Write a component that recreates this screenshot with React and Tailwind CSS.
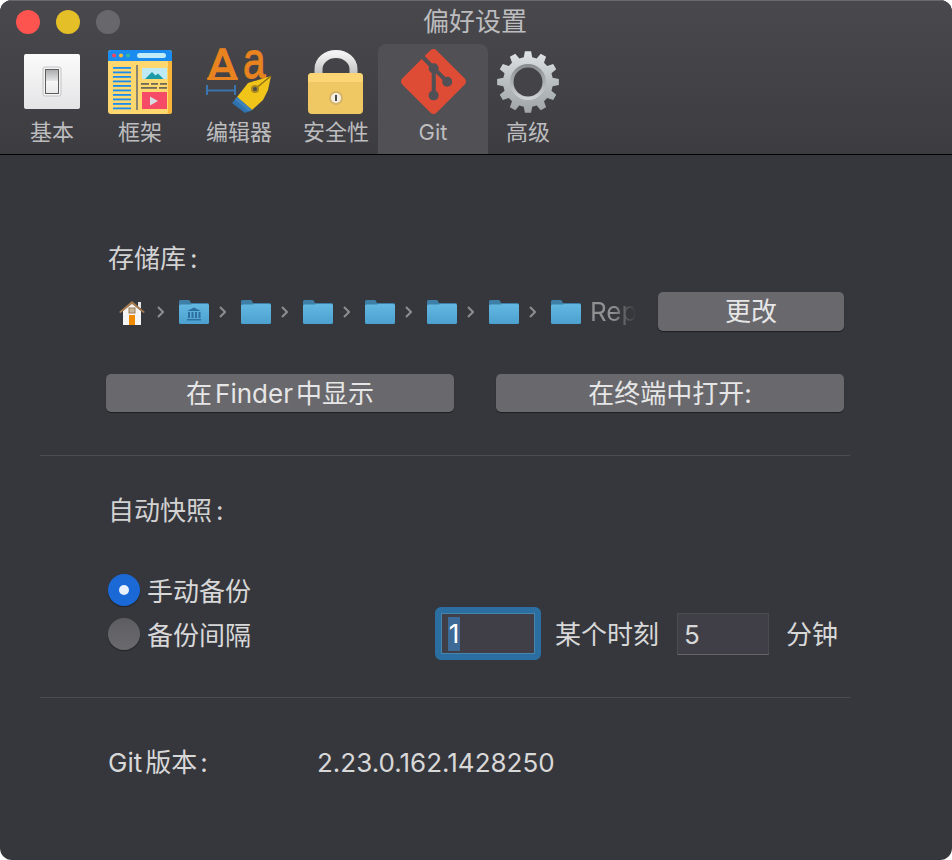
import React from "react";

const FONT = "font-['Inter','Noto_Sans_CJK_SC',sans-serif]";

const SwitchIcon = () => (
    <svg width="64" height="64" viewBox="0 0 64 64">
        <defs>
            <linearGradient id="plate" x1="0" y1="0" x2="0" y2="1">
                <stop offset="0" stopColor="#fbfbfb" />
                <stop offset="1" stopColor="#e4e4e6" />
            </linearGradient>
            <linearGradient id="rocker" x1="0" y1="0" x2="0" y2="1">
                <stop offset="0" stopColor="#a9aaac" />
                <stop offset="0.45" stopColor="#e2e2e3" />
                <stop offset="0.5" stopColor="#f7f7f7" />
                <stop offset="1" stopColor="#e8e8e8" />
            </linearGradient>
        </defs>
        <rect x="4" y="4" width="56" height="55" rx="2" fill="url(#plate)" />
        <rect x="23" y="17" width="18" height="29" rx="2" fill="#f3f3f3" stroke="#c4c4c6" />
        <rect x="25.5" y="19.5" width="13" height="24" fill="url(#rocker)" stroke="#5d5d60" strokeWidth="1" />
    </svg>
);

const FrameIcon = () => (
    <svg width="64" height="64" viewBox="0 0 64 64">
        <rect x="0" y="0" width="64" height="64" rx="3" fill="#ffd76f" />
        <path d="M60 11h4v50a3 3 0 0 1-3 3h-3c2 0 2-2 2-3z" fill="#f9b53a" />
        <path d="M3 0h58a3 3 0 0 1 3 3v8H0V3a3 3 0 0 1 3-3z" fill="#1a8cf0" />
        <circle cx="6" cy="5.5" r="2" fill="#f3475f" />
        <circle cx="13" cy="5.5" r="2" fill="#fdbb32" />
        <circle cx="20" cy="5.5" r="2" fill="#35b8a0" />
        <rect x="29" y="3" width="29" height="5" rx="2.5" fill="#bfeaf7" />
        <g fill="#1a8cf0">
            {[17, 21.5, 26, 30.5, 35, 39.5, 44, 48.5, 53, 57.5].map((y) => (
                <rect key={y} x="5" y={y} width="18" height="1.8" />
            ))}
        </g>
        <rect x="28" y="15" width="2" height="45" fill="#8a8470" />
        <rect x="34" y="18" width="25" height="11" fill="#bdeaf5" />
        <path d="M37 29l7-7 3.500 3.500 2.500-2 5.500 5.500z" fill="#1b9aa8" />
        <g fill="#6f6a58">
            <rect x="33" y="33" width="8" height="1.8" />
            <rect x="43" y="33" width="7" height="1.8" />
            <rect x="52" y="33" width="7" height="1.8" />
            <rect x="33" y="37" width="16" height="1.8" />
            <rect x="51" y="37" width="8" height="1.8" />
        </g>
        <rect x="34" y="42" width="25" height="17" fill="#f64b66" />
        <path d="M42 46.500l8 4.500-8 4.500z" fill="#d7dde0" />
    </svg>
);

const EditorIcon = () => (
    <svg width="68" height="66" viewBox="0 0 68 66">
        <text x="3" y="31" fontFamily="'DejaVu Sans', sans-serif" fontSize="41" textLength="29" lengthAdjust="spacingAndGlyphs" fill="#e9831f" stroke="#e9831f" strokeWidth="1.500">A</text>
        <rect x="2" y="29" width="31" height="3" rx="1.500" fill="#e9831f" />
        <text transform="translate(38 30) scale(0.78 1)" x="0" y="0" fontFamily="'Liberation Sans', sans-serif" fontSize="52" fill="#e9831f" stroke="#e9831f" strokeWidth="1">a</text>
        <path d="M2 37v10M30 37v10M3 42.500h26" stroke="#3c74ae" strokeWidth="2" fill="none" />
        <path d="M66 28L43 35l-7 9-4 5 15 13 11-10 5-10z" fill="#f0c418" />
        <path d="M66 28L50 41" stroke="#8a6b15" strokeWidth="1.200" />
        <circle cx="50" cy="41" r="4" fill="#a9871f" />
        <circle cx="50" cy="41" r="2" fill="#4b4b4b" />
        <path d="M32 49l-5 6 13 10 7-3z" fill="#2f73ae" />
        <path d="M32 49l15 13-3 1.500-14-12z" fill="#3e83bd" />
    </svg>
);

const LockIcon = () => (
    <svg width="62" height="66" viewBox="0 0 62 66">
        <defs>
            <linearGradient id="shackle" x1="0" y1="0" x2="0" y2="1">
                <stop offset="0" stopColor="#f2f2f2" />
                <stop offset="1" stopColor="#b8b8b8" />
            </linearGradient>
        </defs>
        <path d="M13.500 30V21a17.500 15 0 0 1 35 0v9" fill="none" stroke="url(#shackle)" strokeWidth="8" />
        <rect x="3" y="25" width="55" height="41" rx="4" fill="#efc864" />
        <path d="M3 34v-5a4 4 0 0 1 4-4h47a4 4 0 0 1 4 4v5z" fill="#fcd674" />
        <circle cx="31" cy="50" r="7" fill="#d5b466" />
        <circle cx="31" cy="50" r="5" fill="#f4f1e4" />
        <rect x="30" y="47" width="2" height="6" fill="#4a4a4a" />
    </svg>
);

const GitIcon = () => (
    <svg width="65" height="65" viewBox="0 0 24 24">
        <path
            fill="#de4c36"
            d="M23.546 10.93L13.067.452c-.604-.603-1.582-.603-2.188 0L8.708 2.627l2.76 2.76c.645-.215 1.379-.07 1.889.441.516.515.658 1.258.438 1.9l2.658 2.66c.645-.223 1.387-.078 1.9.435.721.72.721 1.884 0 2.604-.719.719-1.881.719-2.6 0-.539-.541-.674-1.337-.404-1.996L12.86 8.955v6.525c.176.086.342.203.488.348.713.721.713 1.883 0 2.6-.719.721-1.889.721-2.609 0-.719-.719-.719-1.879 0-2.598.182-.18.387-.316.605-.406V8.835c-.217-.091-.424-.222-.6-.401-.545-.545-.676-1.342-.396-2.009L7.636 3.7.45 10.881c-.6.605-.6 1.584 0 2.189l10.48 10.477c.604.604 1.582.604 2.186 0l10.43-10.43c.605-.603.605-1.582 0-2.187"
        />
    </svg>
);

const gearPath = () => {
    const teeth = 12;
    let d = "";
    for (let i = 0; i < teeth; i++) {
        const a = (i / teeth) * Math.PI * 2 - Math.PI / 2;
        const pts = [
            [25, -0.17],
            [31, -0.1],
            [31, 0.1],
            [25, 0.17],
        ];
        pts.forEach(([r, off], j) => {
            const x = 32 + r * Math.cos(a + off);
            const y = 32 + r * Math.sin(a + off);
            d += `${i === 0 && j === 0 ? "M" : "L"}${x.toFixed(2)} ${y.toFixed(2)}`;
        });
    }
    return d + "Z";
};

const GearIcon = () => (
    <svg width="64" height="64" viewBox="0 0 64 64">
        <defs>
            <linearGradient id="gear" x1="0" y1="0" x2="0" y2="1">
                <stop offset="0" stopColor="#e0e4e5" />
                <stop offset="0.5" stopColor="#b9bfc1" />
                <stop offset="1" stopColor="#a0a4a7" />
            </linearGradient>
            <linearGradient id="gearRing" x1="0" y1="0" x2="0" y2="1">
                <stop offset="0" stopColor="#868a8d" />
                <stop offset="1" stopColor="#d2d5d6" />
            </linearGradient>
        </defs>
        <path d={gearPath()} fill="url(#gear)" />
        <circle cx="32" cy="32" r="18" fill="url(#gearRing)" />
        <circle cx="32" cy="32" r="14.500" fill="#434348" />
    </svg>
);

const HomeIcon = () => (
    <svg width="26" height="25" viewBox="0 0 26 25">
        <rect x="19" y="2" width="3" height="6" fill="#e6e6e6" />
        <path d="M4 11L13 3l9 8v14H4z" fill="#f4f4f4" />
        <path d="M0 12L13 1l13 11-1.500 1L13 4 1.500 13z" fill="#a67c4e" />
        <rect x="10" y="8" width="6" height="5" fill="#c9b79c" stroke="#9a7a55" strokeWidth="1" />
        <rect x="10" y="15" width="6" height="10" fill="#f08a00" />
    </svg>
);

const FolderIcon = ({ bank }) => (
    <svg width="30" height="24" viewBox="0 0 30 24">
        <defs>
            <linearGradient id="folderFront" x1="0" y1="0" x2="0" y2="1">
                <stop offset="0" stopColor="#63b8e2" />
                <stop offset="1" stopColor="#4ba0cf" />
            </linearGradient>
        </defs>
        <path d="M0 4V1.500A1.500 1.500 0 0 1 1.500 0h8a1.500 1.500 0 0 1 1.200.6L12 3h16.500A1.500 1.500 0 0 1 30 4.500V8H0z" fill="#3d7fa6" />
        <path d="M1.500 4.500H12l1-.5h15.500A1.500 1.500 0 0 1 30 5.500v17a1.500 1.500 0 0 1-1.500 1.500h-27A1.500 1.500 0 0 1 0 22.500V6a1.500 1.500 0 0 1 1.500-1.500z" fill="url(#folderFront)" />
        {bank && (
            <g fill="#2d709f">
                <path d="M15 7.500l7 3.500H8z" />
                <rect x="9" y="12" width="2" height="6" />
                <rect x="12.500" y="12" width="2" height="6" />
                <rect x="16" y="12" width="2" height="6" />
                <rect x="19.500" y="12" width="2" height="6" />
                <rect x="8" y="19" width="14" height="1.500" />
            </g>
        )}
    </svg>
);

const Chevron = () => (
    <svg width="7" height="12" viewBox="0 0 7 12" className="shrink-0">
        <path d="M1 1l5 5-5 5" fill="none" stroke="#8e8e91" strokeWidth="2" />
    </svg>
);

const tabs = [
    { label: "基本", icon: <SwitchIcon />, cls: "w-[96px]" },
    { label: "框架", icon: <FrameIcon />, cls: "w-[80px]" },
    { label: "编辑器", icon: <EditorIcon />, cls: "w-[118px]" },
    { label: "安全性", icon: <LockIcon />, cls: "w-[76px] mr-[4px]" },
    { label: "Git", icon: <GitIcon />, cls: "w-[110px] bg-[#505055] rounded-t-[8px]" },
    { label: "高级", icon: <GearIcon />, cls: "w-[80px]" },
];

const Button = ({ children, className }) => (
    <button
        className={`flex items-center justify-center rounded-[5px] bg-[#69696d] text-[26px] leading-none text-[#e6e6e6] shadow-[0_1px_1px_rgba(0,0,0,0.45)] ${className}`}
    >
        {children}
    </button>
);

const App = () => {
    return (
        <div className="min-h-screen bg-white">
            <div className={`${FONT} flex h-[860px] w-[952px] flex-col overflow-hidden rounded-[12px] bg-[#36373c]`}>
                {/* title bar + toolbar */}
                <div className="relative h-[155px] shrink-0 border-b border-black bg-gradient-to-b from-[#49494d] to-[#3c3c41] shadow-[inset_0_1px_0_#6a6a6e]">
                    <div className="flex h-[44px] items-center pl-[16px]">
                        <div className="flex gap-[16px]">
                            <span className="h-[24px] w-[24px] rounded-full bg-[#fe5450]" />
                            <span className="h-[24px] w-[24px] rounded-full bg-[#e5bf28]" />
                            <span className="h-[24px] w-[24px] rounded-full bg-[#68686c]" />
                        </div>
                        <div className="ml-[303px] w-[104px] text-center text-[26px] leading-none text-[#bcbcbe]">偏好设置</div>
                    </div>
                    <div className="flex h-[110px] pl-[4px]">
                        {tabs.map((tab) => (
                            <div key={tab.label} className={`flex flex-col items-center ${tab.cls}`}>
                                <div className="flex h-[70px] items-end justify-center">{tab.icon}</div>
                                <div className="mt-[4px] text-[22px] leading-[28px] text-[#bdbdbf]">{tab.label}</div>
                            </div>
                        ))}
                    </div>
                </div>

                {/* repository */}
                <div className="pl-[108px] pt-[90px] text-[26px] leading-[28px] text-[#d2d2d3]">
                    存储库<span className="ml-[4px]">:</span>
                </div>
                <div className="mt-[19px] flex h-[40px] items-center pl-[119px]">
                    <HomeIcon />
                    <span className="ml-[12px]"><Chevron /></span>
                    <span className="ml-[15px]"><FolderIcon bank /></span>
                    {[0, 1, 2, 3, 4, 5].map((i) => (
                        <React.Fragment key={i}>
                            <span className="ml-[10px]"><Chevron /></span>
                            <span className="ml-[15px]"><FolderIcon /></span>
                        </React.Fragment>
                    ))}
                    <span className="ml-[9px] w-[46px] overflow-hidden bg-gradient-to-r from-[#919194] from-50% to-[#36373c] bg-clip-text text-[26px] leading-none text-transparent">Repo</span>
                    <Button className="ml-[22px] h-[39px] w-[186px] self-start">更改</Button>
                </div>
                <div className="mt-[42px] flex pl-[106px]">
                    <Button className="h-[38px] w-[348px] pt-[1px]">
                        在<span className="mx-[3px]">Finder</span>中显示
                    </Button>
                    <Button className="ml-[42px] h-[38px] w-[348px] pt-[1px]">在终端中打开:</Button>
                </div>
                <div className="ml-[40px] mt-[43px] h-[1px] w-[810px] bg-[#4d4d51]" />

                {/* snapshots */}
                <div className="mt-[41px] pl-[108px] text-[26px] leading-[28px] text-[#d2d2d3]">
                    自动快照<span className="ml-[4px]">:</span>
                </div>
                <div className="mt-[49px] flex h-[32px] items-center pl-[108px]">
                    <span className="flex h-[32px] w-[32px] items-center justify-center rounded-full bg-[#1a69d6] shadow-[0_1px_1px_rgba(0,0,0,0.4)]">
                        <span className="h-[10px] w-[10px] rounded-full bg-[#e8f0fc]" />
                    </span>
                    <span className="ml-[7px] mt-[4px] text-[26px] leading-none text-[#d8d8d9]">手动备份</span>
                </div>
                <div className="mt-[1px] flex h-[53px] items-center pl-[108px]">
                    <span className="h-[32px] w-[32px] rounded-full bg-gradient-to-b from-[#5e5e62] to-[#6a6a6e] shadow-[0_1px_1px_rgba(0,0,0,0.4)]" />
                    <span className="ml-[7px] mt-[4px] w-[288px] text-[26px] leading-none text-[#d8d8d9]">备份间隔</span>
                    <div className="flex h-[53px] w-[106px] items-center justify-start rounded-[6px] border-[6px] border-[#2b6ea1] bg-[#403f47] pl-[7px] shadow-[inset_0_0_0_1px_#4785ad]">
                        <span className="w-[12px] bg-[#3e6a98] text-center text-[26px] leading-[34px] text-white">1</span>
                    </div>
                    <span className="ml-[14px] mt-[2px] text-[26px] leading-none text-[#d8d8d9]">某个时刻</span>
                    <div className="ml-[18px] flex h-[42px] w-[92px] items-center border border-[#4b4b50] border-b-[#66666a] bg-[#403f47] pl-[6px] pt-[3px] text-[26px] leading-none text-[#d8d8d9]">5</div>
                    <span className="ml-[17px] mt-[2px] text-[26px] leading-none text-[#d8d8d9]">分钟</span>
                </div>
                <div className="ml-[40px] mt-[37px] h-[1px] w-[810px] bg-[#4d4d51]" />

                {/* version */}
                <div className="mt-[50px] flex items-center pl-[108px] text-[26px] leading-[30px] text-[#d8d8d9]">
                    <span className="w-[209px]">
                        <span className="mr-[3px]">Git</span>版本<span className="ml-[3px]">:</span>
                    </span>
                    <span>2.23.0.162.1428250</span>
                </div>
            </div>
        </div>
    );
};

export default App;
